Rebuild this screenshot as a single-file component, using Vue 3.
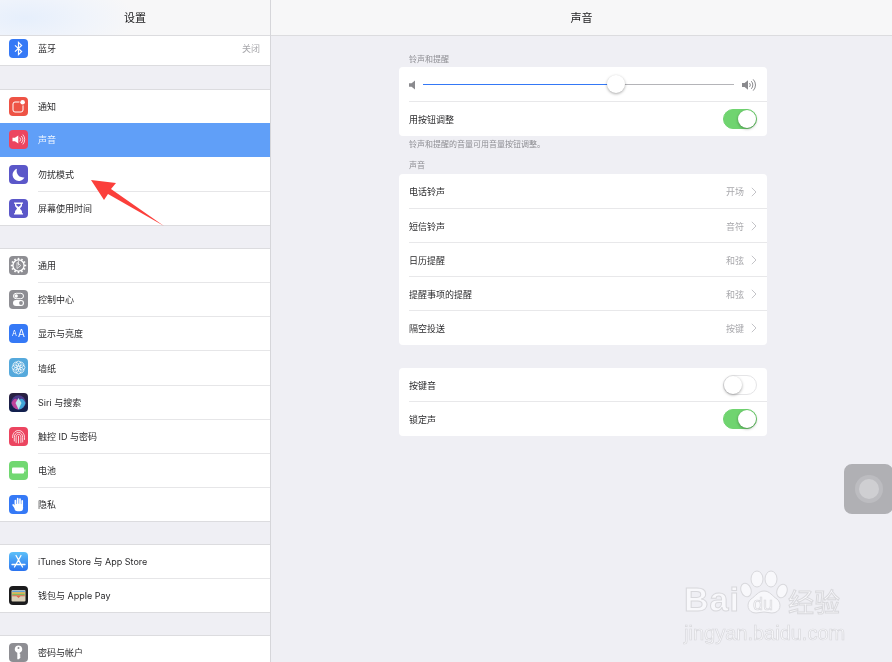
<script setup>
const sideGroups = [
  [{ key: 'bluetooth', label: '蓝牙', value: '关闭' }],
  [
    { key: 'notify', label: '通知' },
    { key: 'sound', label: '声音', active: true },
    { key: 'moon', label: '勿扰模式' },
    { key: 'hourglass', label: '屏幕使用时间' },
  ],
  [
    { key: 'gear', label: '通用' },
    { key: 'control', label: '控制中心' },
    { key: 'display', label: '显示与亮度' },
    { key: 'flower', label: '墙纸', tall: true },
    { key: 'siri', label: 'Siri 与搜索' },
    { key: 'touch', label: '触控 ID 与密码' },
    { key: 'battery', label: '电池' },
    { key: 'hand', label: '隐私' },
  ],
  [
    { key: 'store', label: 'iTunes Store 与 App Store' },
    { key: 'wallet', label: '钱包与 Apple Pay' },
  ],
  [{ key: 'key', label: '密码与帐户' }],
]
const tones = [
  { label: '电话铃声', value: '开场' },
  { label: '短信铃声', value: '音符' },
  { label: '日历提醒', value: '和弦' },
  { label: '提醒事项的提醒', value: '和弦' },
  { label: '隔空投送', value: '按键' },
]
const petals = [0, 45, 90, 135, 180, 225, 270, 315]
const gearTeeth = [0, 30, 60, 90, 120, 150]
</script>

<template>
  <div class="screen">
    <aside class="sidebar">
      <header class="bar side-bar">设置</header>
      <div class="side-list">
        <section v-for="(group, g) in sideGroups" :key="g" class="side-group">
          <div
            v-for="item in group"
            :key="item.key"
            class="side-row"
            :class="{ active: item.active, tall: item.tall }"
          >
            <svg class="app-icon" viewBox="0 0 19 19">
              <template v-if="item.key === 'bluetooth'">
                <rect width="19" height="19" rx="4" fill="#3579f6" />
                <path d="M6 6.4l6.6 6.2-3.1 3V3.4l3.1 3L6 12.6" fill="none" stroke="#fff" stroke-width="1.2" />
              </template>
              <template v-else-if="item.key === 'notify'">
                <rect width="19" height="19" rx="4" fill="#ee5345" />
                <rect x="4" y="5" width="10" height="10" rx="2" fill="none" stroke="#fff" stroke-width="1" />
                <circle cx="13.6" cy="5.2" r="3.2" fill="#ee5345" />
                <circle cx="13.6" cy="5.2" r="2.3" fill="#fff" />
              </template>
              <template v-else-if="item.key === 'sound'">
                <rect width="19" height="19" rx="4" fill="#ec4560" />
                <path d="M3.5 7.8h2.4L9.3 5.5v8L5.9 11.2H3.500z" fill="#fff" />
                <path d="M10.800 7.500a3 3 0 0 1 0 4M12.300 6a5.200 5.200 0 0 1 0 7M13.800 4.600a7.200 7.200 0 0 1 0 9.800" fill="none" stroke="#fff" stroke-width=".8" />
              </template>
              <template v-else-if="item.key === 'moon'">
                <rect width="19" height="19" rx="4" fill="#5b57c9" />
                <path d="M8 3.800a6.200 6.200 0 1 0 7.400 8.600A6.600 6.600 0 0 1 8 3.800z" fill="#fff" />
              </template>
              <template v-else-if="item.key === 'hourglass'">
                <rect width="19" height="19" rx="4" fill="#5b57c9" />
                <path d="M5 3.500h9v1.300h-1v1.600c0 1.400-2 2.200-2 3.100s2 1.700 2 3.100v1.600h1v1.300H5v-1.300h1v-1.600c0-1.400 2-2.200 2-3.100s-2-1.700-2-3.100V4.800H5z" fill="#fff" />
                <path d="M7.300 5h4.400v1.200L9.500 8 7.300 6.200z" fill="#5b57c9" />
              </template>
              <template v-else-if="item.key === 'gear'">
                <rect width="19" height="19" rx="4" fill="#8e8e93" />
                <g fill="#fff">
                  <rect v-for="a in gearTeeth" :key="a" x="8.700" y="1.800" width="1.600" height="15.400" :transform="`rotate(${a} 9.500 9.500)`" />
                </g>
                <circle cx="9.500" cy="9.500" r="6.200" fill="#fff" />
                <circle cx="9.500" cy="9.500" r="4.900" fill="#8e8e93" />
                <path d="M8 6.500l3.800 3-3.800 3zM9.500 4.800v4.700" fill="none" stroke="#fff" stroke-width=".7" />
              </template>
              <template v-else-if="item.key === 'control'">
                <rect width="19" height="19" rx="4" fill="#8e8e93" />
                <rect x="4.500" y="3.300" width="10" height="5.400" rx="2.700" fill="none" stroke="#fff" stroke-width="1" />
                <circle cx="7.200" cy="6" r="1.700" fill="#fff" />
                <rect x="4" y="10" width="11" height="6" rx="3" fill="#fff" />
                <circle cx="12" cy="13" r="1.900" fill="#8e8e93" />
              </template>
              <template v-else-if="item.key === 'display'">
                <rect width="19" height="19" rx="4" fill="#3579f6" />
                <text x="3" y="12.300" class="aa-small">A</text>
                <text x="9" y="12.800" class="aa-big">A</text>
              </template>
              <template v-else-if="item.key === 'flower'">
                <rect width="19" height="19" rx="4" fill="#55a9dc" />
                <g fill="none" stroke="#fff" stroke-width=".7">
                  <circle v-for="a in petals" :key="a" cx="9.500" cy="5.700" r="2.600" :transform="`rotate(${a} 9.500 9.500)`" />
                </g>
              </template>
              <template v-else-if="item.key === 'siri'">
                <defs>
                  <linearGradient id="siri-bg" x1="0" y1="0" x2="0" y2="1">
                    <stop offset="0" stop-color="#2b2140" />
                    <stop offset="1" stop-color="#11204f" />
                  </linearGradient>
                </defs>
                <rect width="19" height="19" rx="4" fill="url(#siri-bg)" />
                <circle cx="9.500" cy="9.500" r="7.200" fill="#4d3a8c" />
                <path d="M2.500 10C4.500 6 6.500 5 8 6.500l1.500 10C6 16.500 3.500 13.500 2.500 10z" fill="#c0449a" />
                <path d="M16.500 10C14.500 6 12.500 5 11 6.500l-1.500 10c3.500 0 6-3 7-6.500z" fill="#3fa6d8" />
                <path d="M6.500 10L9.500 5l3 5-3 6.500z" fill="#bfe9ec" />
              </template>
              <template v-else-if="item.key === 'touch'">
                <rect width="19" height="19" rx="4" fill="#ec4560" />
                <g fill="none" stroke="#fff" stroke-width=".8" stroke-linecap="round">
                  <path d="M3.500 10.500C3.500 6.500 6 3.500 9.500 3.500s6 3 6 7v2" />
                  <path d="M5.300 14v-3.500C5.300 7.800 7 5.400 9.500 5.400s4.200 2.400 4.200 5.100V15" />
                  <path d="M7.100 15.500v-5c0-1.700 1-3.200 2.400-3.200s2.400 1.500 2.400 3.200v5" />
                  <path d="M9.500 9.300v6.700" />
                </g>
              </template>
              <template v-else-if="item.key === 'battery'">
                <rect width="19" height="19" rx="4" fill="#71d871" />
                <rect x="3" y="6.500" width="12" height="6" rx="1" fill="#fff" />
                <rect x="15.400" y="8.400" width="1" height="2.200" fill="#fff" />
              </template>
              <template v-else-if="item.key === 'hand'">
                <rect width="19" height="19" rx="4" fill="#3579f6" />
                <g fill="none" stroke="#fff" stroke-width="1.700" stroke-linecap="round">
                  <path d="M6.400 10V5.600M8.700 10V3.700M11 10V4M13.200 11V5.800M6.800 13.500L4.200 10" />
                </g>
                <rect x="5.500" y="8.800" width="8.600" height="7.400" rx="3.200" fill="#fff" />
              </template>
              <template v-else-if="item.key === 'store'">
                <defs>
                  <linearGradient id="store-bg" x1="0" y1="0" x2="0" y2="1">
                    <stop offset="0" stop-color="#5cc0f9" />
                    <stop offset="1" stop-color="#2a72ef" />
                  </linearGradient>
                </defs>
                <rect width="19" height="19" rx="4" fill="url(#store-bg)" />
                <path d="M7 3.500l6.500 11.500M12 3.500L5.500 15M3 12.500h13" fill="none" stroke="#fff" stroke-width="1.300" stroke-linecap="round" />
              </template>
              <template v-else-if="item.key === 'wallet'">
                <rect width="19" height="19" rx="4" fill="#1b1b1d" />
                <rect x="2.500" y="4" width="14" height="11.500" rx="1" fill="#d8cfb8" />
                <rect x="3.200" y="4.600" width="12.600" height="1.700" fill="#5fa0d8" />
                <rect x="3.200" y="6.300" width="12.600" height="1.500" fill="#e3b33f" />
                <rect x="3.200" y="7.800" width="12.600" height="1.500" fill="#7dbb63" />
                <path d="M3.200 9.300h12.600v1h-4.300L9.500 12l-2-1.700H3.200z" fill="#dc6a50" />
              </template>
              <template v-else-if="item.key === 'key'">
                <rect width="19" height="19" rx="4" fill="#8e8e93" />
                <path d="M9.500 2.500a3.700 3.700 0 0 1 1.200 7.200V11l1 1-1 1 1 1-1.700 2.300H8.300V9.700A3.700 3.700 0 0 1 9.500 2.500z" fill="#fff" />
                <circle cx="9.500" cy="5" r="1" fill="#8e8e93" />
              </template>
            </svg>
            <span class="side-label">{{ item.label }}</span>
            <span v-if="item.value" class="value">{{ item.value }}</span>
          </div>
        </section>
      </div>
    </aside>

    <main class="detail">
      <header class="bar">声音</header>
      <div class="detail-body">
        <p class="caption first">铃声和提醒</p>
        <section class="card">
          <div class="row">
            <svg class="speaker-low" viewBox="0 0 7 10">
              <path d="M0 3.200h2.600L6 .5v9L2.600 6.800H0z" fill="#8a8a8e" />
            </svg>
            <div class="slider">
              <span class="slider-fill"></span>
              <span class="slider-rest"></span>
              <span class="slider-knob"></span>
            </div>
            <svg class="speaker-high" viewBox="0 0 15 14">
              <path d="M0 5h2.600L6 2.200v9.600L2.600 9H0z" fill="#8a8a8e" />
              <path d="M7.500 5a3 3 0 0 1 0 4M9.300 3.200a5.500 5.500 0 0 1 0 7.600M11.200 1.400a8 8 0 0 1 0 11.200" fill="none" stroke="#8a8a8e" stroke-width="1" />
            </svg>
          </div>
          <div class="row">
            <span class="row-label">用按钮调整</span>
            <span class="switch on"><span class="switch-knob"></span></span>
          </div>
        </section>
        <p class="caption footnote">铃声和提醒的音量可用音量按钮调整。</p>
        <p class="caption second">声音</p>
        <section class="card">
          <div v-for="tone in tones" :key="tone.label" class="row">
            <span class="row-label">{{ tone.label }}</span>
            <span class="value">{{ tone.value }}</span>
            <svg class="chevron" viewBox="0 0 6 10">
              <path d="M.8.8L5 5 .8 9.200" fill="none" stroke="#c4c4c8" stroke-width="1" />
            </svg>
          </div>
        </section>
        <section class="card tight">
          <div class="row">
            <span class="row-label">按键音</span>
            <span class="switch"><span class="switch-knob"></span></span>
          </div>
          <div class="row">
            <span class="row-label">锁定声</span>
            <span class="switch on"><span class="switch-knob"></span></span>
          </div>
        </section>
      </div>
    </main>

    <svg class="arrow" viewBox="0 0 76 48">
      <path d="M1 1L26 4 21 10 74 47 18 15 14 21z" fill="#fb3f3b" />
    </svg>

    <div class="assistive">
      <span class="assistive-ring"><span class="assistive-dot"></span></span>
    </div>

    <div class="watermark">
      <div class="mark-top">
        <span class="mark-bai">Bai</span>
        <span class="mark-paw">
          <svg viewBox="0 0 48 46">
            <g fill="#f8f8fb" stroke="#d8d8dc" stroke-width="1">
              <ellipse cx="6" cy="20" rx="5" ry="7" transform="rotate(-20 6 20)" />
              <ellipse cx="17" cy="9" rx="6" ry="8" />
              <ellipse cx="31" cy="9" rx="6" ry="8" />
              <ellipse cx="42" cy="21" rx="5" ry="7" transform="rotate(20 42 21)" />
              <path d="M24 21c6 0 8 5 13 8 5 4 4 14-5 14-3 0-5-1-8-1s-5 1-8 1c-9 0-10-10-5-14 5-3 7-8 13-8z" />
            </g>
          </svg>
          <span class="mark-du">du</span>
        </span>
        <span class="mark-cn">经验</span>
      </div>
      <div class="mark-url">jingyan.baidu.com</div>
    </div>
  </div>
</template>

<style>
html, body { margin: 0; background: #efeff4; }
</style>

<style scoped>
.screen {
  position: relative;
  display: flex;
  width: 892px;
  height: 662px;
  overflow: hidden;
  background: #efeff4;
  color: #2a2a2c;
  font-family: Inter, "Noto Sans CJK SC", sans-serif;
  font-size: 9px;
  filter: blur(0.3px);
}
.sidebar {
  display: flex;
  flex-direction: column;
  flex: none;
  box-sizing: border-box;
  width: 271px;
  height: 662px;
  overflow: hidden;
  border-right: 1px solid #d6d6da;
}
.bar {
  position: relative;
  z-index: 1;
  flex: none;
  box-sizing: border-box;
  height: 36px;
  padding-top: 2px;
  border-bottom: 1px solid #dcdcdf;
  background: #f7f7f8;
  font-size: 11px;
  line-height: 33px;
  text-align: center;
  color: #1c1c1e;
}
.side-bar {
  background: radial-gradient(ellipse 110px 40px at 25px 18px, #e6effc 0%, #f0f4fb 55%, #f7f7f8 100%);
}
.side-list {
  margin-top: -4px;
}
.side-group {
  margin-top: 22px;
  border-top: 1px solid #dcdcdf;
  border-bottom: 1px solid #dcdcdf;
  background: #fff;
}
.side-group:first-child {
  margin-top: 0;
  border-top: 0;
}
.side-group:nth-child(2) {
  margin-top: 23px;
}
.side-row {
  position: relative;
  display: flex;
  align-items: center;
  box-sizing: border-box;
  height: 34px;
  padding: 0 10px 1px 9px;
}
.side-row.tall {
  height: 35px;
}
.side-row:last-child {
  height: 33px;
  padding-bottom: 0;
}
.side-row:not(:last-child)::after {
  content: "";
  position: absolute;
  left: 38px;
  right: 0;
  bottom: 0;
  height: 1px;
  background: #e6e6e8;
}
.side-row.active {
  height: 34px;
  margin-top: -1px;
  margin-bottom: 1px;
  background: #609ff8;
  color: #eef5ff;
}
.side-row.active::after {
  display: none;
}
.app-icon {
  flex: none;
  width: 19px;
  height: 19px;
  margin-top: -1px;
}
.side-label {
  flex: 1;
  margin-left: 10px;
  white-space: nowrap;
}
.value {
  color: #a8a8ac;
}
.aa-small {
  fill: #fff;
  font-size: 7px;
  font-family: Inter, sans-serif;
}
.aa-big {
  fill: #fff;
  font-size: 10px;
  font-family: Inter, sans-serif;
}
.detail {
  flex: 1;
  display: flex;
  flex-direction: column;
  min-width: 0;
}
.detail-body {
  width: 368px;
  padding-left: 128px;
}
.caption {
  margin: 0;
  padding-left: 10px;
  font-size: 8px;
  line-height: 12px;
  color: #8e8e93;
}
.caption.first {
  margin: 17px 0 2px;
}
.caption.footnote {
  margin-top: 2px;
}
.caption.second {
  margin: 9px 0 3px;
}
.card {
  overflow: hidden;
  border-radius: 4px;
  background: #fff;
}
.card.tight {
  margin-top: 23px;
}
.row {
  position: relative;
  display: flex;
  align-items: center;
  box-sizing: border-box;
  height: 34px;
  padding: 0 10px;
  font-size: 9px;
}
.row:first-child {
  height: 35px;
}
.card.tight .row:first-child {
  height: 34px;
}
.row:not(:last-child)::after {
  content: "";
  position: absolute;
  left: 10px;
  right: 0;
  bottom: 0;
  height: 1px;
  background: #e8e8ea;
}
.row-label {
  flex: 1;
  white-space: nowrap;
}
.row .value {
  margin-right: 7px;
}
.chevron {
  flex: none;
  width: 6px;
  height: 10px;
}
.speaker-low {
  flex: none;
  width: 7px;
  height: 10px;
  margin-right: 7px;
}
.speaker-high {
  flex: none;
  width: 15px;
  height: 14px;
  margin-left: 8px;
}
.slider {
  position: relative;
  flex: 1;
  display: flex;
  height: 1px;
}
.slider-fill {
  width: 193px;
  background: #3478f6;
}
.slider-rest {
  flex: 1;
  background: #b4b4b8;
}
.slider-knob {
  position: absolute;
  left: 184px;
  top: -9px;
  width: 18px;
  height: 18px;
  border-radius: 50%;
  background: #fff;
  box-shadow: 0 1px 3px rgba(0, 0, 0, 0.35);
}
.switch {
  position: relative;
  flex: none;
  box-sizing: border-box;
  width: 34px;
  height: 20px;
  border: 1px solid #e5e5e7;
  border-radius: 10px;
  background: #fff;
}
.switch-knob {
  position: absolute;
  left: 0;
  top: 0;
  width: 18px;
  height: 18px;
  border-radius: 50%;
  background: #fff;
  box-shadow: 0 1px 3px rgba(0, 0, 0, 0.35);
}
.switch.on {
  border-color: #70d470;
  background: #70d470;
}
.switch.on .switch-knob {
  left: 14px;
}
.arrow {
  position: absolute;
  left: 90px;
  top: 179px;
  width: 76px;
  height: 48px;
}
.assistive {
  position: absolute;
  left: 844px;
  top: 464px;
  display: flex;
  align-items: center;
  justify-content: center;
  width: 49px;
  height: 50px;
  border-radius: 8px;
  background: #b0b0b4;
}
.assistive-ring {
  display: flex;
  align-items: center;
  justify-content: center;
  width: 28px;
  height: 28px;
  border-radius: 50%;
  background: #bcbcc0;
}
.assistive-dot {
  width: 20px;
  height: 20px;
  border-radius: 50%;
  background: #cfcfd2;
}
.watermark {
  position: absolute;
  left: 684px;
  top: 564px;
  width: 170px;
  color: #f8f8fb;
  font-family: "Liberation Sans", sans-serif;
  -webkit-text-stroke: 1px #d8d8dc;
}
.mark-top {
  display: flex;
  align-items: flex-end;
  height: 54px;
}
.mark-bai {
  font-size: 34px;
  font-weight: 700;
  line-height: 38px;
  letter-spacing: 1px;
}
.mark-paw {
  position: relative;
  width: 48px;
  height: 48px;
  margin-left: 0;
}
.mark-paw svg {
  display: block;
  width: 48px;
  height: 46px;
}
.mark-du {
  position: absolute;
  left: 13px;
  top: 24px;
  font-size: 18px;
  line-height: 20px;
  -webkit-text-stroke: 0.7px #d8d8dc;
}
.mark-cn {
  margin-left: 0;
  font-family: "Noto Sans CJK SC", sans-serif;
  font-size: 26px;
  line-height: 34px;
}
.mark-url {
  margin-top: 4px;
  font-size: 20px;
  line-height: 22px;
  -webkit-text-stroke: 0.7px #d8d8dc;
  white-space: nowrap;
}
</style>
